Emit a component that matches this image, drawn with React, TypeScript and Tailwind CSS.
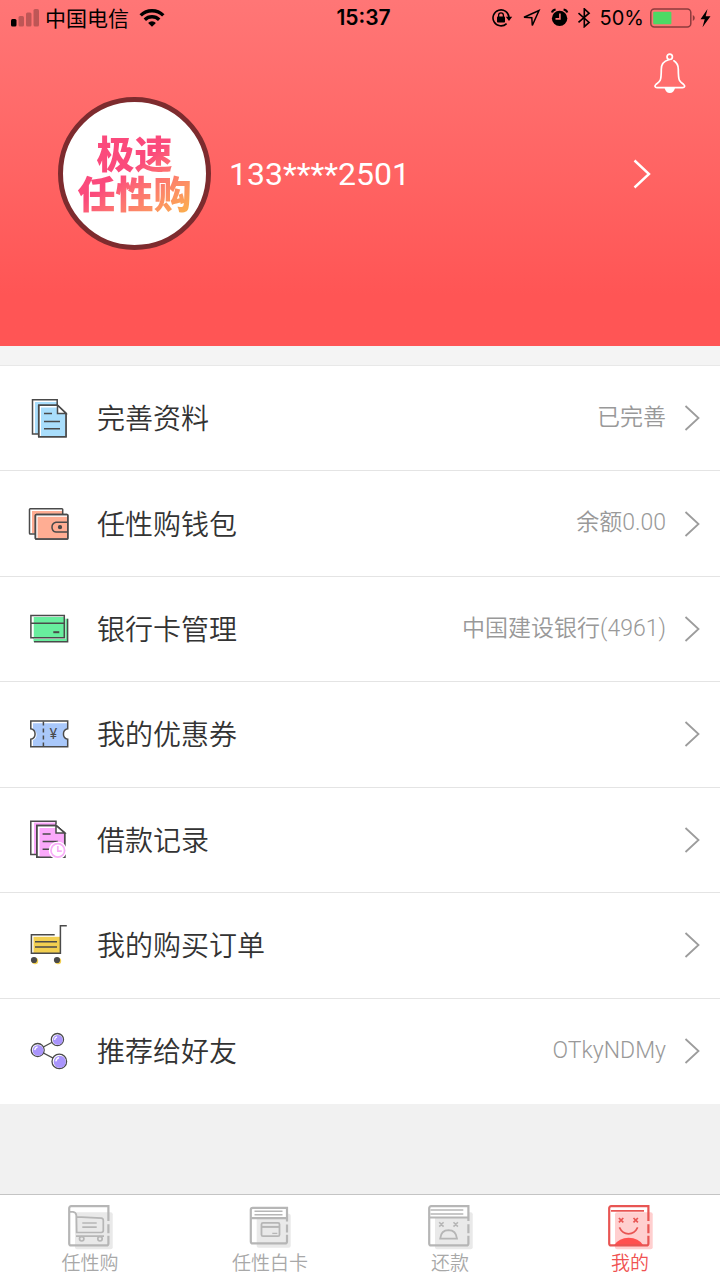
import type { ReactNode } from 'react'

const INK = '#4a4a4a'

function DocsIcon() {
  return (
    <svg viewBox="0 0 42 42" className="h-[42px] w-[42px]" fill="none" stroke={INK} strokeWidth="1.5">
      <path d="M7 5h22v32H7z" fill="#a9defc" stroke="none" />
      <path d="M4.5 2.7h24.7V37H4.5z" />
      <path d="M10.7 8.3h18.8L38 16.4v23.3H10.7z" fill="#fff" />
      <path d="M13 10.5h16.5V16.4H37.5v22.8H13z" fill="#a9defc" stroke="none" />
      <path d="M10.7 8.3h18.8L38 16.4v23.3H10.7z" />
      <path d="M29.5 8.3v8.1H38z" fill="#fff" />
      <path d="M16 16.4h8M16 24.4h16M16 31.8h16" strokeWidth="1.5" />
    </svg>
  )
}

function WalletIcon() {
  return (
    <svg viewBox="0 0 42 42" className="h-[42px] w-[42px]" fill="none" stroke={INK} strokeWidth="1.5">
      <path d="M4 8h30v22H4z" fill="#ffad93" stroke="none" />
      <rect x="1.5" y="5.7" width="33.2" height="25.3" rx=".8" />
      <rect x="7.4" y="11.6" width="32.4" height="24.4" rx=".8" fill="#fff" />
      <path d="M9.6 13.8h29.6v21.6H9.6z" fill="#ffad93" stroke="none" />
      <rect x="7.4" y="11.6" width="32.4" height="24.4" rx=".8" />
      <path d="M39.8 19.3H28a5 5 0 0 0 0 9.8h11.8" />
      <circle cx="32" cy="24.2" r="1.4" fill={INK} />
    </svg>
  )
}

function BankCardIcon() {
  return (
    <svg viewBox="0 0 42 42" className="h-[42px] w-[42px]" fill="none" stroke={INK} strokeWidth="1.5">
      <path d="M5.5 9h30.8v1.7h3.4v23H5.5z" fill="#68ee9e" stroke="none" />
      <path d="M3.3 8h2.2v21H3.3zM36.4 10.7h1v20.2H6v-1.4h30.4z" fill="#fff" stroke="none" />
      <path d="M2.9 7.4h33.4v22.3H2.9zM2.9 15.3h33.4" />
      <path d="M39.6 10.8v22.9H6" />
      <path d="M25.3 24.2h6" strokeWidth="2" />
    </svg>
  )
}

function CouponIcon() {
  return (
    <svg viewBox="0 0 42 42" className="h-[42px] w-[42px]" fill="none" stroke={INK} strokeWidth="1.5">
      <path d="M5 10.3h34v5.5a5.3 5.3 0 0 0 0 10.4v7H5v-6a6 6 0 0 0 0-11z" fill="#a9c8fa" stroke="none" />
      <path d="M2.8 8h36.9v7.8a5.3 5.3 0 0 0 0 10.4v7.5H2.8v-7.5a5.3 5.3 0 0 0 0-10.4z" />
      <path d="M15.4 8.5v25.2" strokeWidth="1.5" strokeDasharray="4 3" />
      <text x="25.4" y="26" textAnchor="middle" fontSize="14" fontFamily="Inter, sans-serif" fill={INK} stroke="none">¥</text>
    </svg>
  )
}

function RecordIcon() {
  return (
    <svg viewBox="0 0 42 42" className="h-[42px] w-[42px]" fill="none" stroke={INK} strokeWidth="1.5">
      <path d="M6 3.5h22v32H6z" fill="#fba9fb" stroke="none" />
      <path d="M28 5.5V2.2H2.8v33.2h6" />
      <path d="M8.8 6.4H28l8.7 7.5v24.4H8.8z" fill="#fff" />
      <path d="M11.5 9H28v5h8v24H11.5z" fill="#fba9fb" stroke="none" />
      <path d="M8.8 6.4H28l8.7 7.5v24.4H8.8z" />
      <path d="M28 6.4v7.5h8.7z" fill="#fff" />
      <path d="M14.6 15.1h8M14.6 22.4h15.5M14.6 30.3h8" />
      <circle cx="29.8" cy="31.4" r="9" fill="#fff" stroke="none" />
      <circle cx="29.8" cy="31.4" r="6.8" stroke="#f8aef8" strokeWidth="1.8" />
      <path d="M29.8 27v5.2h4" stroke="#f8aef8" strokeWidth="1.7" />
    </svg>
  )
}

function OrderIcon() {
  return (
    <svg viewBox="0 0 42 42" className="h-[42px] w-[42px]" fill="none" stroke={INK} strokeWidth="1.5">
      <path d="M5.5 12.8h26.8v16.4H5.5z" fill="#f2cf50" stroke="none" />
      <path d="M38.8 1.7h-6.4v27.6h-29V10.8h23.3" />
      <path d="M7 17.8h22M7 23h22" />
      <circle cx="7" cy="37" r="3.2" fill="#f2cf50" stroke="none" />
      <circle cx="30" cy="37" r="3.2" fill="#f2cf50" stroke="none" />
      <circle cx="6" cy="36" r="3.1" fill={INK} stroke="none" />
      <circle cx="29" cy="36" r="3.1" fill={INK} stroke="none" />
    </svg>
  )
}

function ShareIcon() {
  return (
    <svg viewBox="0 0 42 42" className="h-[42px] w-[42px]" fill="none" stroke={INK} strokeWidth="1.3">
      <path d="M9.7 20 29.3 9.5M9.7 20l21.6 11.3" />
      <g fill="#fff">
        <circle cx="29.4" cy="9.6" r="6.1" />
        <circle cx="9.7" cy="20" r="6.5" />
        <circle cx="31.3" cy="31.4" r="7.3" />
      </g>
      <g fill="#aa95fc" stroke="none">
        <circle cx="29.8" cy="10" r="5" />
        <circle cx="10.1" cy="20.4" r="5.4" />
        <circle cx="31.8" cy="31.9" r="6.1" />
      </g>
      <path d="M26.5 9.8q.4-2.5 2.6-3M6.7 20.2q.4-2.8 2.9-3.3M27.8 31.4q.4-3 3.3-3.8" stroke="#fff" />
    </svg>
  )
}

function CartTabIcon() {
  return (
    <svg viewBox="0 0 48 48" className="h-12 w-12" fill="none" stroke="#b6b6b6" strokeWidth="2.2">
      <rect x="9" y="9.3" width="37.7" height="37" rx="2" fill="#e9e9e9" stroke="none" />
      <path d="M42.4 18V3.2H5.2a2 2 0 0 0-2 2v35.2a2 2 0 0 0 2 2h35.2a2 2 0 0 0 2-2v-7.6M42.4 21.3v9" />
      <path d="M4 8.8h3q3 .4 3.4 3.5l.3 17.2h24.6q2-.2 2-2V17.4q0-2-2-2.2l-24.6-1.4M10 33.1h28M16.3 20h14.4M16.3 24.2h14.4" strokeWidth="1.7" />
      <circle cx="15.7" cy="35.8" r="2.2" strokeWidth="1.7" fill="#e9e9e9" />
      <circle cx="34" cy="35.8" r="2.2" strokeWidth="1.7" fill="#e9e9e9" />
    </svg>
  )
}

function WhiteCardTabIcon() {
  return (
    <svg viewBox="0 0 48 48" className="h-12 w-12" fill="none" stroke="#b6b6b6" strokeWidth="2.2">
      <rect x="10.7" y="10.7" width="34" height="34" rx="2" fill="#e9e9e9" stroke="none" />
      <path d="M5 5h36v10H5z" fill="#fff" stroke="none" />
      <path d="M41 18.5V4.8H6.8a2 2 0 0 0-2 2v31.6a2 2 0 0 0 2 2H39a2 2 0 0 0 2-2v-6.6M41 21.5v8M4.8 15.1H41" />
      <path d="M8.5 8.2h28M8.5 11.8h28" strokeWidth="1.4" />
      <rect x="15.5" y="19.8" width="18" height="13.4" rx="1.5" strokeWidth="1.8" />
      <path d="M15.5 23.9h18" strokeWidth="2" />
      <path d="M26.3 30.4h5" strokeWidth="1.3" />
    </svg>
  )
}

function RepayTabIcon() {
  return (
    <svg viewBox="0 0 48 48" className="h-12 w-12" fill="none" stroke="#b6b6b6" strokeWidth="2.2">
      <rect x="9" y="9.3" width="37.7" height="37" rx="2" fill="#e9e9e9" stroke="none" />
      <path d="M4 4h38v10H4z" fill="#fff" stroke="none" />
      <path d="M42.4 18V3.2H5.2a2 2 0 0 0-2 2v35.2a2 2 0 0 0 2 2h35.2a2 2 0 0 0 2-2v-7.6M42.4 21.3v9M3.2 14.5h39.2" />
      <path d="M4.5 7.1h32.8M4.5 10.9h32.8" strokeWidth="1.5" />
      <path d="m13.2 19.2 4.4 4.4m0-4.4-4.4 4.4M27.5 19.2l4.4 4.4m0-4.4-4.4 4.4" strokeWidth="1.6" />
      <path d="M14.2 35.6q.8-8.3 8.3-8.4 7.5.1 8.5 8.4z" strokeWidth="1.8" />
    </svg>
  )
}

function MineTabIcon() {
  return (
    <svg viewBox="0 0 48 48" className="h-12 w-12" fill="none" stroke="#e85553" strokeWidth="2.2">
      <rect x="9" y="9.3" width="37.7" height="37" rx="2" fill="#ffcfcf" stroke="none" />
      <path d="M8 42.4q5-7.6 14.7-7.6t14.8 7.6z" fill="#ff504f" stroke="none" />
      <path d="M42.4 18V3.2H5.2a2 2 0 0 0-2 2v35.2a2 2 0 0 0 2 2h35.2a2 2 0 0 0 2-2v-7.6M42.4 21.3v9" />
      <path d="M5 7.9h33" strokeWidth="1.7" />
      <path d="m12.9 15 4.4 4.4m0-4.4-4.4 4.4M27.5 15l4.4 4.4m0-4.4-4.4 4.4M13.4 24.4q3 6.4 9.1 6.4t9.2-6.4" strokeWidth="1.7" />
    </svg>
  )
}

function Signal() {
  return (
    <svg viewBox="0 0 28 18" className="h-[18px] w-7" aria-label="signal">
      <rect x="0" y="10" width="5.5" height="7.5" rx="1.5" fill="#000" />
      <g fill="#000" opacity=".25">
        <rect x="7.5" y="7" width="5.5" height="10.5" rx="1.5" />
        <rect x="15" y="3.5" width="5.5" height="14" rx="1.5" />
        <rect x="22.5" y="0" width="5.5" height="17.5" rx="1.5" />
      </g>
    </svg>
  )
}

function Wifi() {
  return (
    <svg viewBox="0 0 26 18" className="h-[18px] w-[26px]" fill="none" stroke="#000" strokeWidth="3.4" aria-label="wifi">
      <path d="M1.7 6.4a16 16 0 0 1 22.6 0M5.8 10.8a10.2 10.2 0 0 1 14.4 0" />
      <path d="M13 17.8l-3.9-3.9a5.4 5.4 0 0 1 7.8 0z" fill="#000" stroke="none" />
    </svg>
  )
}

function StatusIcons() {
  return (
    <svg viewBox="0 0 102 20" className="h-5 w-[102px]" fill="none" stroke="#000" strokeWidth="1.6" aria-hidden="true">
      <path d="M14.6 15.6A8 8 0 1 1 17 9.5" />
      <path d="M13.8 8.7h6.4L17 13z" fill="#000" stroke="none" />
      <rect x="5" y="8.6" width="8" height="6" rx=".8" fill="#000" stroke="none" />
      <path d="M6.6 9V7.3a2.4 2.4 0 0 1 4.8 0V9" strokeWidth="1.3" />
      <path d="M32 9.2 47 2.5l-6.7 15-.5-7.7z" strokeWidth="1.5" />
      <circle cx="67.6" cy="10.4" r="7.7" fill="#000" stroke="none" />
      <path d="M60 4.5q.5-2.5 3.6-3M75.2 4.5q-.5-2.5-3.6-3" strokeWidth="2.2" />
      <path d="M67.9 5.5v5.4h-4.4" stroke="#ff7474" />
      <path d="m86.5 5.2 10.6 9.2-4.8 4.3V.8l4.8 4.4-10.6 9.2" />
    </svg>
  )
}

function Battery() {
  return (
    <svg viewBox="0 0 62 20" className="h-5 w-[62px]" aria-label="battery charging">
      <rect x=".8" y="1" width="40" height="18" rx="3.5" fill="none" stroke="#8d3b3d" strokeWidth="1.5" />
      <rect x="3.2" y="3.7" width="18.2" height="12.6" rx="1" fill="#4cd964" />
      <path d="M42.8 7q2 .8 2 3t-2 3z" fill="#8d3b3d" />
      <path d="M57.5 1 50.5 11.2h4.2L52.5 19.2l8-11h-4.8z" fill="#000" />
    </svg>
  )
}

function BellIcon() {
  return (
    <svg viewBox="0 0 32 42" className="h-[42px] w-8" fill="none" stroke="#fff" strokeWidth="1.7" strokeLinecap="round">
      <circle cx="15.7" cy="4.8" r="2.7" />
      <path d="M14.7 7.8q-7.4 2-7.4 9.4 0 9-1.2 11.2c-1 2-2.5 2.8-4 3.9-1.8 1.4-1.3 3.4.9 3.4h25.6c2.2 0 2.7-2 .9-3.4-1.5-1.1-3-1.9-4-3.9q-1.2-2.2-1.2-11.2 0-5.5-4.4-8.4" />
      <path d="M10.6 36h10.4q-1.2 5-5.2 5t-5.2-5z" fill="#fff" stroke="none" />
    </svg>
  )
}

const rows: { label: string; value?: string; icon: ReactNode }[] = [
  { label: '完善资料', value: '已完善', icon: <DocsIcon /> },
  { label: '任性购钱包', value: '余额0.00', icon: <WalletIcon /> },
  { label: '银行卡管理', value: '中国建设银行(4961)', icon: <BankCardIcon /> },
  { label: '我的优惠券', icon: <CouponIcon /> },
  { label: '借款记录', icon: <RecordIcon /> },
  { label: '我的购买订单', icon: <OrderIcon /> },
  { label: '推荐给好友', value: 'OTkyNDMy', icon: <ShareIcon /> },
]

const tabs: { label: string; icon: ReactNode; active?: boolean }[] = [
  { label: '任性购', icon: <CartTabIcon /> },
  { label: '任性白卡', icon: <WhiteCardTabIcon /> },
  { label: '还款', icon: <RepayTabIcon /> },
  { label: '我的', icon: <MineTabIcon />, active: true },
]

export default function App() {
  return (
    <div className="flex min-h-screen flex-col bg-[#f1f1f1] font-['Inter','Noto_Sans_CJK_SC',sans-serif] text-[#333]">
      <header className="bg-linear-to-b from-[#ff7676] to-[#ff5555] to-85% pb-24">
        <div className="grid h-9 grid-cols-[1fr_auto_1fr] items-center pr-2 pl-[11px] text-black">
          <div className="flex items-center gap-[6px]">
            <Signal />
            <span className="pt-0.5 text-[21px] leading-8">中国电信</span>
            <span className="ml-1"><Wifi /></span>
          </div>
          <time className="pl-1 text-[21px] font-semibold">15:37</time>
          <div className="flex items-center justify-end gap-[6px]">
            <StatusIcons />
            <span className="text-xl">50%</span>
            <Battery />
          </div>
        </div>

        <div className="flex justify-end pt-4 pr-[34px]">
          <button type="button" aria-label="消息">
            <BellIcon />
          </button>
        </div>

        <button type="button" className="mt-[3px] flex w-full items-center pr-[69px] pl-[58px] text-left">
          <span className="flex h-[153px] w-[153px] shrink-0 items-center justify-center rounded-full border-[5px] border-[#7d2b2e] bg-white">
            <span className="bg-linear-to-br from-[#fb4a7c] from-45% to-[#fbab4f] to-95% bg-clip-text text-center text-[38px] leading-10 font-black text-transparent">
              极速
              <br />
              任性购
            </span>
          </span>
          <span className="ml-[18px] flex-1 font-['Roboto',sans-serif] text-[32px] text-white">133****2501</span>
          <svg viewBox="0 0 18 30" className="h-[30px] w-[18px]" fill="none" stroke="#fff" strokeWidth="2.4">
            <path d="m1.5 1.5 14.5 13.5-14.5 13.5" />
          </svg>
        </button>
      </header>

      <main className="flex flex-1 flex-col">
        <div className="h-[19px] bg-[#f4f4f4]" />
        <ul className="grid flex-1 auto-rows-fr divide-y divide-[#e4e4e4] border-t border-[#e8e8e8] bg-white">
          {rows.map((row) => (
            <li key={row.label} className="flex">
              <button type="button" className="flex min-h-20 flex-1 items-center pr-5 pl-7 text-left">
                {row.icon}
                <span className="ml-[27px] flex-1 pt-0.5 text-[28px] leading-10 font-[350]">{row.label}</span>
                {row.value && (
                  <span className="font-['Roboto','Noto_Sans_CJK_SC',sans-serif] text-[23px] font-[350] text-[#999]">
                    {row.value}
                  </span>
                )}
                <svg viewBox="0 0 16 26" className="ml-[18px] h-[26px] w-4" fill="none" stroke="#9c9c9c" strokeWidth="1.8">
                  <path d="m1.5 1 13 12-13 12" />
                </svg>
              </button>
            </li>
          ))}
        </ul>
      </main>

      <nav className="mt-[90px] grid grid-cols-4 border-t border-[#c4c4c4] bg-white">
        {tabs.map((tab) => (
          <a
            key={tab.label}
            href="#"
            aria-current={tab.active ? 'page' : undefined}
            className={`flex h-[85px] flex-col items-center pt-2 text-[19px] leading-[26px] font-[350] ${tab.active ? 'text-[#f05252]' : 'text-[#a8a8a8]'}`}
          >
            {tab.icon}
            {tab.label}
          </a>
        ))}
      </nav>
    </div>
  )
}
